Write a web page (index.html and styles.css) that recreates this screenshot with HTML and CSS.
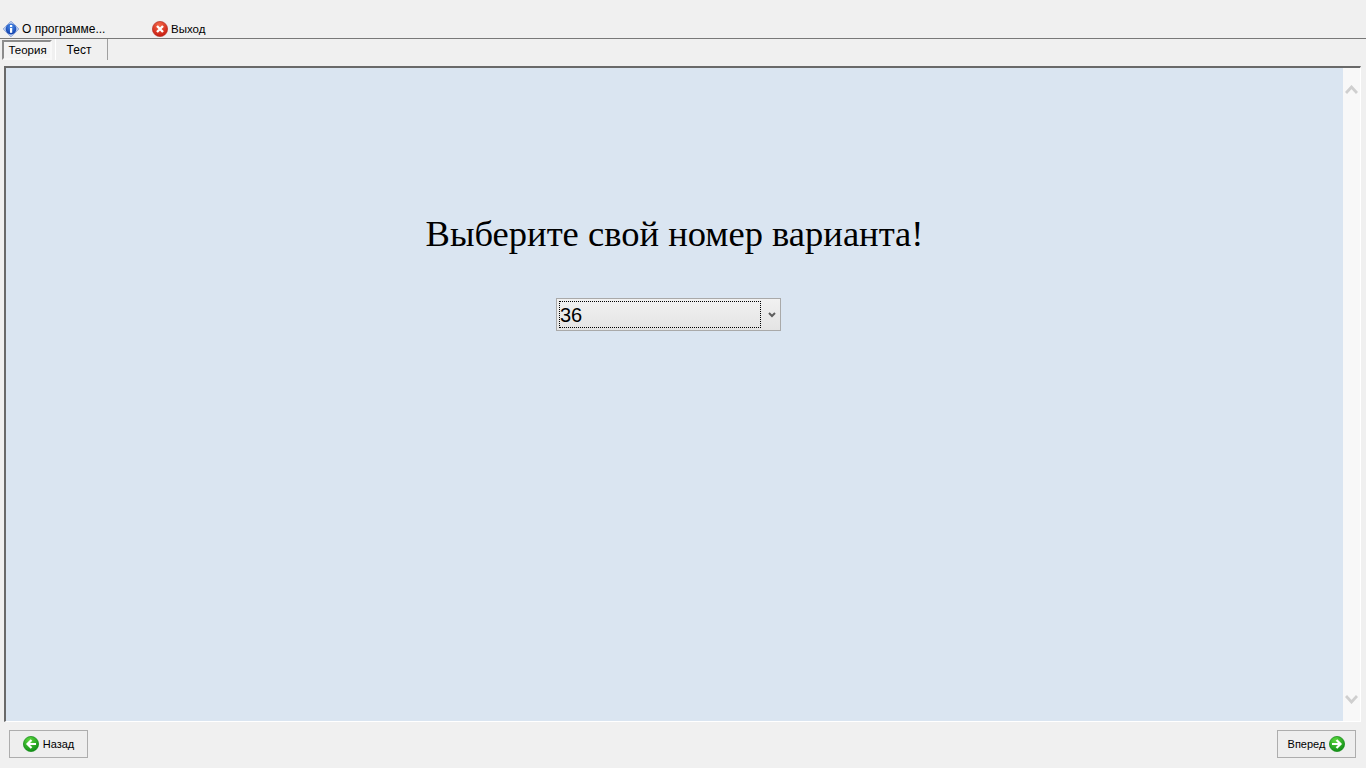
FILE: index.html
```html
<!DOCTYPE html>
<html lang="ru">
<head>
<meta charset="utf-8">
<title>Тест</title>
<link rel="stylesheet" href="styles.css">
</head>
<body>
<div class="app">
  <div class="toolbar">
    <div class="tool tool-about">
      <svg class="ic16" viewBox="0 0 16 16"><defs><radialGradient id="bd" cx="50%" cy="30%" r="70%"><stop offset="0" stop-color="#4f90ec"/><stop offset="1" stop-color="#0a3aa8"/></radialGradient></defs><path d="M8 .2 15.800 8 8 15.800 .2 8Z" fill="#c4d4f2" stroke="#7f9ad4" stroke-width=".9"/><circle cx="8" cy="8" r="5.400" fill="url(#bd)"/><rect x="7" y="7" width="2.200" height="4.800" fill="#fff"/><rect x="7" y="4" width="2.200" height="2" fill="#fff"/></svg>
      <span>О программе...</span>
    </div>
    <div class="tool tool-exit">
      <svg class="ic16" viewBox="0 0 16 16"><defs><radialGradient id="rd" cx="45%" cy="25%" r="80%"><stop offset="0" stop-color="#f4694a"/><stop offset="1" stop-color="#c4140a"/></radialGradient></defs><circle cx="8" cy="8" r="7.600" fill="url(#rd)" stroke="#b5322a" stroke-width=".7"/><path d="M5 5 11 11M11 5 5 11" stroke="#fff" stroke-width="2.400"/></svg>
      <span>Выход</span>
    </div>
  </div>
  <div class="tabs">
    <div class="tab tab-active">Теория</div>
    <div class="tab tab-idle">Тест</div>
  </div>
  <div class="panel">
    <div class="content">
      <h1 class="title">Выберите свой номер варианта!</h1>
      <div class="combo">
        <div class="combo-value">36</div>
        <svg class="combo-arrow" viewBox="0 0 8 6"><path d="M1 1 4 4 7 1" fill="none" stroke="#5e5e5e" stroke-width="2"/></svg>
      </div>
    </div>
    <div class="scrollbar">
      <svg class="sb-arrow" viewBox="0 0 13 9"><path d="M1 8 6.500 2 12 8" fill="none" stroke="#cfcfcf" stroke-width="2.800"/></svg>
      <svg class="sb-arrow" viewBox="0 0 13 9"><path d="M1 1 6.500 7 12 1" fill="none" stroke="#cfcfcf" stroke-width="2.800"/></svg>
    </div>
  </div>
  <div class="footer">
    <div class="btn">
      <svg class="ic16" viewBox="0 0 16 16"><defs><radialGradient id="gr" cx="40%" cy="25%" r="80%"><stop offset="0" stop-color="#5cd83e"/><stop offset="1" stop-color="#0c8a14"/></radialGradient></defs><circle cx="8" cy="8" r="7.600" fill="url(#gr)" stroke="#0f8a12" stroke-width=".7"/><path d="M13 8H5M8.500 4 4.500 8 8.500 12" fill="none" stroke="#fff" stroke-width="2.200"/></svg>
      <span>Назад</span>
    </div>
    <div class="btn">
      <span>Вперед</span>
      <svg class="ic16" viewBox="0 0 16 16"><circle cx="8" cy="8" r="7.600" fill="url(#gr)" stroke="#0f8a12" stroke-width=".7"/><path d="M3 8H11M7.500 4 11.500 8 7.500 12" fill="none" stroke="#fff" stroke-width="2.200"/></svg>
    </div>
  </div>
</div>
</body>
</html>
```
FILE: styles.css
```css
* { box-sizing: border-box; }
html, body { margin: 0; height: 100%; }
body { background: #f0f0f0; font-family: "Liberation Sans", Arial, sans-serif; font-size: 11.500px; color: #000; overflow: hidden; }
.app { height: 768px; display: flex; flex-direction: column; }
.toolbar { height: 39px; border-bottom: 1px solid #787878; display: flex; align-items: flex-end; padding: 0 0 1px 3px; }
.tool { display: flex; align-items: center; gap: 3px; height: 17px; }
.tool-about { width: 149px; font-size: 12px; }
.ic16 { width: 16px; height: 16px; flex: none; display: block; }
.tabs { height: 22px; display: flex; padding-left: 2px; }
.tab { height: 21px; display: flex; justify-content: center; }
.tab-active { width: 50px; height: 20px; margin-top: 1px; border: 2px solid #8c8c8c; border-right-color: #f8f8f8; border-bottom-color: #f8f8f8; background: #f4f4f4; align-items: center; padding: 0 0 1px 1px; }
.tab-idle { width: 53px; margin-left: 3px; border-left: 1px solid #fff; border-right: 1px solid #a0a0a0; align-items: flex-start; padding: 4px 5px 0 0; font-size: 12px; }
.panel { margin: 5px 5px 0 4px; height: 656px; display: flex; border-top: 2px solid #696969; border-left: 2px solid #696969; border-right: 1px solid #fff; border-bottom: 1px solid #fff; }
.content { flex: 1; background: #dae5f1; display: flex; flex-direction: column; align-items: center; }
.title { margin: 143px 0 0; font: 400 36.560px/46px "Liberation Serif", "Times New Roman", serif; }
.combo { width: 225px; height: 33px; margin: 41px 12px 0 0; border: 1px solid #a9a9a9; background: linear-gradient(#f1f1f1, #e4e4e4); padding: 2px; display: flex; align-items: center; }
.combo-value { width: 202px; height: 27px; border: 1px dotted #000; font: 20px/26px "Liberation Sans", Arial, sans-serif; }
.combo-arrow { width: 8px; height: 6px; margin-left: 7px; }
.scrollbar { width: 17px; background: #f8f8f8; display: flex; flex-direction: column; justify-content: space-between; align-items: center; padding: 17px 0 17px; }
.sb-arrow { width: 13px; height: 9px; display: block; }
.footer { flex: 1; display: flex; justify-content: space-between; align-items: flex-start; padding: 8px 10px 0 9px; }
.btn { width: 79px; height: 28px; border: 1px solid #adadad; background: #eeeeee; display: flex; align-items: center; justify-content: center; gap: 4px; font-size: 11px; }
```
